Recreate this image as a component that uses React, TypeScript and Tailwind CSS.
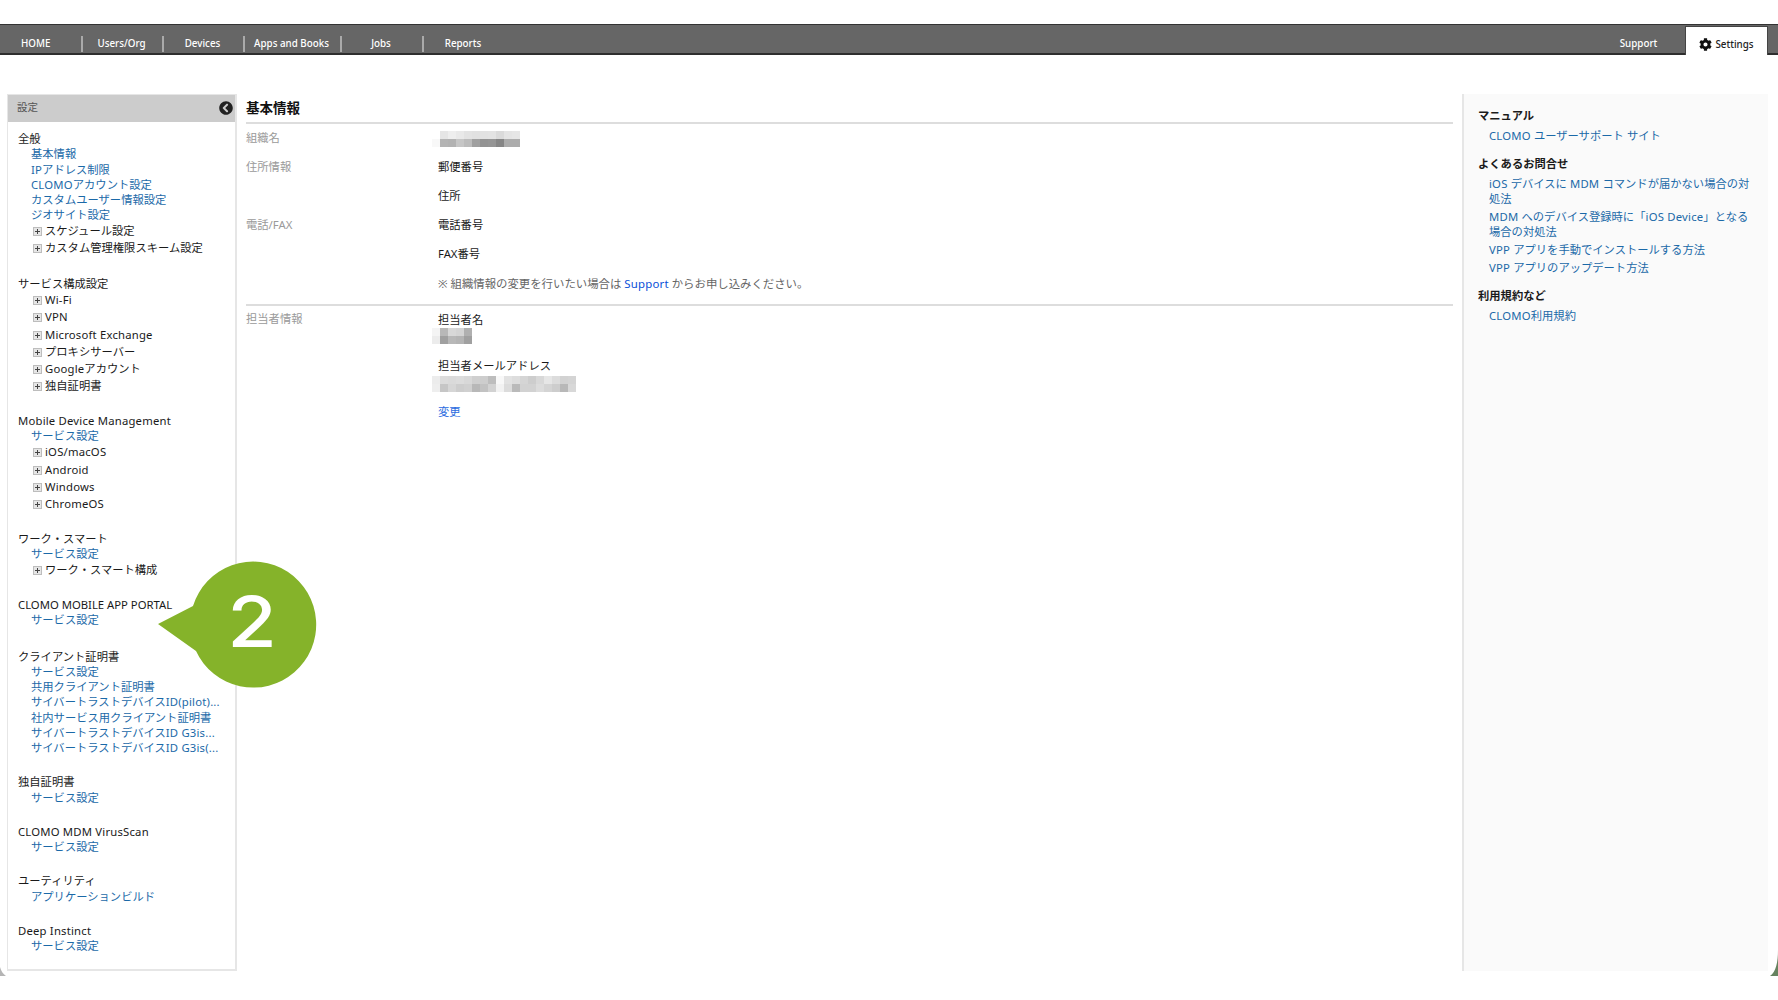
import React from "react";
import { FaCog, FaChevronCircleLeft } from "react-icons/fa";

const FONT = "font-['Noto_Sans','Noto_Sans_CJK_JP',sans-serif]";

function L({ children }: { children: string }) {
  const parts = children.split(/([A-Za-z0-9 \-\/().「」]+)/);
  return (
    <>
      {parts.map((p, i) =>
        i % 2 === 1 ? (
          <span key={i} className="inline-block whitespace-pre tracking-[0.2px]">
            {p}
          </span>
        ) : (
          p
        )
      )}
    </>
  );
}

function Plus() {
  return (
    <svg width="9" height="9" viewBox="0 0 9 9" className="shrink-0">
      <rect x="0" y="0" width="9" height="9" fill="#bdbdbd" />
      <rect x="1" y="1" width="7" height="7" fill="#e6e6e6" />
      <path d="M2 4.5h5M4.5 2v5" stroke="#444" strokeWidth="1" />
    </svg>
  );
}

function Heading({ children, plain }: { children: string; plain?: boolean }) {
  return (
    <div className="h-[15.25px] leading-[15.25px] text-[#1a1a1a] whitespace-nowrap">
      {plain ? children : <L>{children}</L>}
    </div>
  );
}
function SideLink({ children }: { children: string }) {
  return (
    <div className="h-[15.25px] leading-[15.25px] pl-[13px] text-[#1b69a8] whitespace-nowrap overflow-hidden">
      <L>{children}</L>
    </div>
  );
}
function Tree({ children, first }: { children: string; first?: boolean }) {
  return (
    <div className={`h-[17.2px] flex items-center pl-[15px] gap-[3px] text-[#1a1a1a] whitespace-nowrap ${first ? "mt-[1px]" : ""}`}>
      <Plus />
      <span>
        <L>{children}</L>
      </span>
    </div>
  );
}
function Group({ children, gap = "mb-[19px]" }: { children: React.ReactNode; gap?: string }) {
  return <div className={gap}>{children}</div>;
}

function Pixels({ rows }: { rows: string[][] }) {
  return (
    <div className="flex flex-col">
      {rows.map((r, i) => (
        <div key={i} className="flex h-[8px]">
          {r.map((c, j) => (
            <div key={j} className="w-[8px] h-[8px]" style={{ backgroundColor: c }} />
          ))}
        </div>
      ))}
    </div>
  );
}

const NAV = [
  { t: "Users/Org", w: "w-[81px]" },
  { t: "Devices", w: "w-[81px]" },
  { t: "Apps and Books", w: "w-[97px]" },
  { t: "Jobs", w: "w-[82px]" },
];

function Nav() {
  return (
    <div className="mt-[24px] h-[31px] bg-[#666666] border-t border-t-[#333] border-b-2 border-b-[#2e2e2e] flex items-center text-white text-[9.8px] font-medium relative">
      <div className="w-[83px] h-[16px] pl-[21px] flex items-center border-r-2 border-r-[#aaaaaa] mt-[10px]">HOME</div>
      {NAV.map((n) => (
        <div key={n.t} className={`${n.w} h-[16px] pr-[2px] flex items-center justify-center border-r-2 border-r-[#aaaaaa] mt-[10px] whitespace-nowrap`}>
          {n.t}
        </div>
      ))}
      <div className="w-[80px] h-[16px] pr-[2px] flex items-center justify-center mt-[10px]">Reports</div>
      <div className="ml-auto w-[37px] mr-[28px] mt-[10px] flex justify-center">Support</div>
      <div className="w-[83px] h-[29px] mt-[2px] mb-[-2px] pt-[7px] self-end bg-white border-l border-r border-t border-[#444] border-b-0 text-[#222] flex items-center justify-center gap-[3px]">
        <FaCog className="w-[13px] h-[13px] text-[#111] -mt-[1px]" />
        <span className="mt-[1px]">Settings</span>
      </div>
      <div className="w-[10px]" />
    </div>
  );
}

function Sidebar() {
  return (
    <div className="w-[230px] h-[877px] shrink-0 border border-[#e6e6e6] border-b-2 border-r-2 text-[11.3px] flex flex-col">
      <div className="h-[27px] shrink-0 bg-[#cccccc] flex items-center justify-between pl-[9px] pr-[2px] pb-[1px] text-[#555] text-[10.5px]">
        <span>設定</span>
        <FaChevronCircleLeft className="w-[14px] h-[14px] text-[#222]" />
      </div>
      <div className="pl-[10px] pt-[9px]">
        <Group>
          <Heading>全般</Heading>
          <SideLink>基本情報</SideLink>
          <SideLink>IPアドレス制限</SideLink>
          <SideLink>CLOMOアカウント設定</SideLink>
          <SideLink>カスタムユーザー情報設定</SideLink>
          <SideLink>ジオサイト設定</SideLink>
          <Tree>スケジュール設定</Tree>
          <Tree>カスタム管理権限スキーム設定</Tree>
        </Group>
        <Group gap="mb-[17.5px]">
          <Heading>サービス構成設定</Heading>
          <Tree first>Wi-Fi</Tree>
          <Tree>VPN</Tree>
          <Tree>Microsoft Exchange</Tree>
          <Tree>プロキシサーバー</Tree>
          <Tree>Googleアカウント</Tree>
          <Tree>独自証明書</Tree>
        </Group>
        <Group gap="mb-[17.5px]">
          <Heading>Mobile Device Management</Heading>
          <SideLink>サービス設定</SideLink>
          <Tree first>iOS/macOS</Tree>
          <Tree>Android</Tree>
          <Tree>Windows</Tree>
          <Tree>ChromeOS</Tree>
        </Group>
        <Group gap="mb-[17.5px]">
          <Heading>ワーク・スマート</Heading>
          <SideLink>サービス設定</SideLink>
          <Tree first>ワーク・スマート構成</Tree>
        </Group>
        <Group gap="mb-[21.5px]">
          <Heading plain>CLOMO MOBILE APP PORTAL</Heading>
          <SideLink>サービス設定</SideLink>
        </Group>
        <Group>
          <Heading>クライアント証明書</Heading>
          <SideLink>サービス設定</SideLink>
          <SideLink>共用クライアント証明書</SideLink>
          <SideLink>サイバートラストデバイスID(pilot)...</SideLink>
          <SideLink>社内サービス用クライアント証明書</SideLink>
          <SideLink>サイバートラストデバイスID G3is...</SideLink>
          <SideLink>サイバートラストデバイスID G3is(...</SideLink>
        </Group>
        <Group>
          <Heading>独自証明書</Heading>
          <SideLink>サービス設定</SideLink>
        </Group>
        <Group>
          <Heading>CLOMO MDM VirusScan</Heading>
          <SideLink>サービス設定</SideLink>
        </Group>
        <Group>
          <Heading>ユーティリティ</Heading>
          <SideLink>アプリケーションビルド</SideLink>
        </Group>
        <Group>
          <Heading>Deep Instinct</Heading>
          <SideLink>サービス設定</SideLink>
        </Group>
      </div>
    </div>
  );
}

function Row({ label, children }: { label?: string; children: React.ReactNode }) {
  return (
    <div className="grid grid-cols-[192px_1fr] h-[29px] items-center">
      <div className="text-[#9a9a9a]">{label}</div>
      <div className="text-[#1a1a1a]">{children}</div>
    </div>
  );
}

function Main() {
  return (
    <div className="w-[1207px] ml-[9px] shrink-0 text-[11.3px]">
      <div className="h-[30px] border-b-2 border-b-[#dddddd] flex items-center font-bold text-[13.5px] text-[#111]">基本情報</div>
      <Row label="組織名">
        <div className="-ml-[6px]">
          <Pixels
            rows={[
              ["#ffffff", "#e6e6e6", "#eeeeee", "#e9e9e9", "#e3e3e3", "#e1e1e1", "#e2e2e2", "#e3e3e3", "#dadada", "#e4e4e4", "#e6e6e6"],
              ["#f8f8f8", "#b4b4b4", "#b2b2b2", "#c6c6c6", "#bcbcbc", "#a0a0a0", "#939393", "#959595", "#868686", "#acacac", "#acacac"],
            ]}
          />
        </div>
      </Row>
      <Row label="住所情報">郵便番号</Row>
      <Row>住所</Row>
      <Row label="電話/FAX">電話番号</Row>
      <Row>FAX番号</Row>
      <Row>
        <span className="text-[#666] text-[11.4px] whitespace-nowrap">
          ※ 組織情報の変更を行いたい場合は <span className="text-[#0a50d8] tracking-[0.2px]">Support</span> からお申し込みください。
        </span>
      </Row>
      <div className="mt-[6px] border-t-2 border-t-[#dddddd] pt-[6px] grid grid-cols-[192px_1fr]">
        <div className="text-[#9a9a9a] leading-[16px] -mt-[1px]">担当者情報</div>
        <div className="text-[#1a1a1a]">
          <div className="h-[16px] leading-[16px]">担当者名</div>
          <div className="-ml-[6px]">
            <Pixels
              rows={[
                ["#f4f4f4", "#b8b8b8", "#d8d8d8", "#d4d4d4", "#b0b0b0"],
                ["#ececec", "#a0a0a0", "#b8b8b8", "#b4b4b4", "#a0a0a0"],
              ]}
            />
          </div>
          <div className="h-[16px] leading-[16px] mt-[14px] mb-[2px]">担当者メールアドレス</div>
          <div className="-ml-[6px]">
            <Pixels
              rows={[
                ["#ececec", "#dcdcdc", "#dadada", "#dcdcdc", "#d8d8d8", "#cfcfcf", "#cdcdcd", "#bdbdbd", "#f8f8f8", "#e2e2e2", "#dddddd", "#d5d5d5", "#cdcdcd", "#d8d8d8", "#e6e6e6", "#dcdcdc", "#d2d2d2", "#d4d4d4"],
                ["#eeeeee", "#c6c6c6", "#d6d6d6", "#cdcdcd", "#d0d0d0", "#b8b8b8", "#c2c2c2", "#d2d2d2", "#f2f2f2", "#dcdcdc", "#bababa", "#d2d2d2", "#d2d2d2", "#dcdcdc", "#d4d4d4", "#cdcdcd", "#b8b8b8", "#d8d8d8"],
              ]}
            />
          </div>
          <div className="h-[16px] leading-[16px] mt-[12px] text-[#2a6be0]">変更</div>
        </div>
      </div>
    </div>
  );
}

function RH({ children, first }: { children: React.ReactNode; first?: boolean }) {
  return <div className={`h-[15px] leading-[15px] font-bold text-[#1a1a1a] ${first ? "" : "mt-[13px]"}`}>{children}</div>;
}
function RL({ lines }: { lines: string[] }) {
  return (
    <div className="pl-[11px] mt-[3px] first:mt-0 text-[#1b69a8]">
      {lines.map((t) => (
        <div key={t} className="h-[15px] leading-[15px] whitespace-nowrap">
          <L>{t}</L>
        </div>
      ))}
    </div>
  );
}

function Right() {
  return (
    <div className="w-[306px] h-[877px] ml-[9px] shrink-0 bg-[#fafafa] border-l-2 border-l-[#e6e6e6] pl-[14px] pr-[16px] pt-[14px] text-[11.3px]">
      <RH first>マニュアル</RH>
      <div className="mt-[5px]">
        <RL lines={["CLOMO ユーザーサポート サイト"]} />
      </div>
      <RH>よくあるお問合せ</RH>
      <div className="mt-[5px]">
        <RL lines={["iOS デバイスに MDM コマンドが届かない場合の対", "処法"]} />
        <RL lines={["MDM へのデバイス登録時に「iOS Device」となる", "場合の対処法"]} />
        <RL lines={["VPP アプリを手動でインストールする方法"]} />
        <RL lines={["VPP アプリのアップデート方法"]} />
      </div>
      <RH>利用規約など</RH>
      <div className="mt-[5px]">
        <RL lines={["CLOMO利用規約"]} />
      </div>
    </div>
  );
}

function Callout() {
  return (
    <div className="absolute left-[150px] top-[555px] w-[175px] h-[140px]">
      <svg width="175" height="140" viewBox="150 555 175 140" className="absolute inset-0">
        <path d="M158 624 L193 606 A63 63 0 1 1 196 651 Z" fill="#85b32a" />
      </svg>
      <span className="absolute left-[52px] top-[27px] w-[100px] text-center text-white text-[70px] leading-[80px] font-['Inter',sans-serif] font-medium scale-x-[1.15]">2</span>
    </div>
  );
}

export default function App() {
  return (
    <div className={`relative w-[1778px] h-[1000px] bg-white overflow-hidden ${FONT}`}>
      <Nav />
      <div className="flex mt-[39px] pl-[7px]">
        <Sidebar />
        <Main />
        <Right />
      </div>
      <Callout />
      <svg width="8" height="10" viewBox="0 0 8 10" className="absolute left-0 top-[967px]">
        <path d="M0 0 C1 4 3 7 6 9 L0 9 Z" fill="#b5b5b5" />
      </svg>
      <svg width="8" height="27" viewBox="0 0 8 27" className="absolute left-[1770px] top-[950px]">
        <path d="M8 0 C8 12 6 22 0 26 L8 26 Z" fill="#66825f" />
      </svg>
    </div>
  );
}
